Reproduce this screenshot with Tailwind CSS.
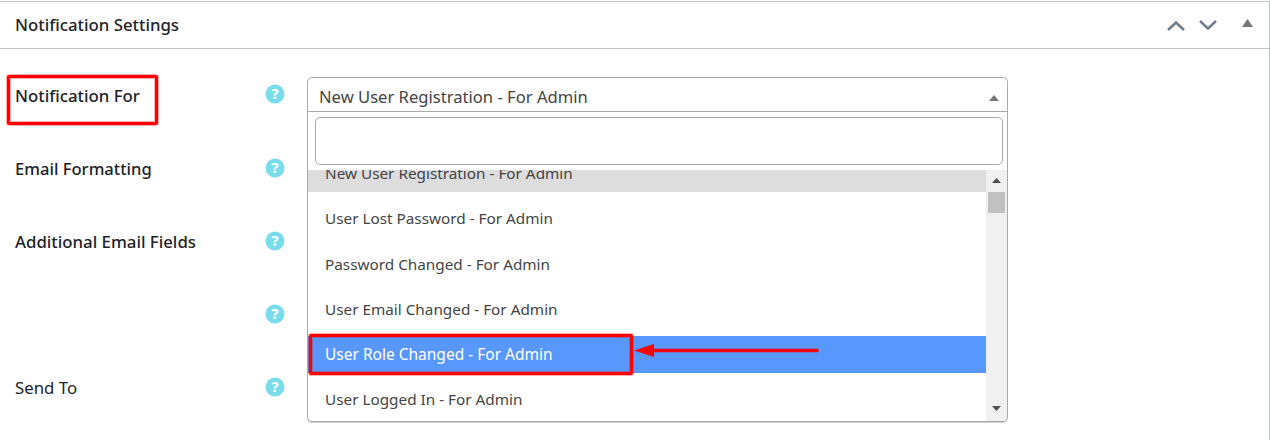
<!DOCTYPE html>
<html lang="en">

<head>
    <meta charset="UTF-8">
    <meta name="viewport" content="width=device-width, initial-scale=1.0">
    <title>Notification Settings</title>
    <script src="https://cdn.jsdelivr.net/npm/@tailwindcss/browser@4"></script>
</head>

<body class="bg-white font-['Noto_Sans',sans-serif] text-[#1d2327] overflow-hidden">
    <div class="relative w-[1270px] h-[440px] overflow-hidden">
        <div class="h-[440px] border-t border-r border-[#c3c4c7] mt-px">
            <!-- panel header -->
            <div class="h-[47px] border-b border-[#c3c4c7] flex items-center justify-between pl-[15px] pr-[17px]">
                <h2 class="text-[16.8px] font-medium text-[#1d2327]">Notification Settings</h2>
                <div class="flex items-center">
                    <svg width="18" height="11" viewBox="0 0 18 11" class="mr-[14px]" fill="none" stroke="#6f7c8a" stroke-width="2.4"><path d="M1 10l8-7.5 8 7.5" /></svg>
                    <svg width="18" height="11" viewBox="0 0 18 11" class="mr-[25px]" fill="none" stroke="#6f7c8a" stroke-width="2.4"><path d="M1 1l8 7.5 8-7.5" /></svg>
                    <svg width="11" height="8" viewBox="0 0 11 8" class="mb-[5px] mr-[-1px]"><path d="M5.5 0L11 8H0z" fill="#72777c" /></svg>
                </div>
            </div>

            <div class="flex">
                <!-- labels -->
                <div class="w-[307px] shrink-0 pl-[15px] pr-[22px] pt-[35px] text-[16.8px] font-medium">
                    <div class="h-[73px] flex justify-between">
                        <span class="leading-[24px]">Notification For</span>
                        <svg width="20" height="20" viewBox="0 0 20 20" class="mt-[0px]"><circle cx="10" cy="10" r="9.5" fill="#78dced" /><text x="10" y="15" text-anchor="middle" font-size="15" font-weight="700" fill="#fff" font-family="Noto Sans">?</text></svg>
                    </div>
                    <div class="h-[73px] flex justify-between">
                        <span class="leading-[24px] text-[16.6px]">Email Formatting</span>
                        <svg width="20" height="20" viewBox="0 0 20 20" class="mt-[1px]"><circle cx="10" cy="10" r="9.5" fill="#78dced" /><text x="10" y="15" text-anchor="middle" font-size="15" font-weight="700" fill="#fff" font-family="Noto Sans">?</text></svg>
                    </div>
                    <div class="h-[73px] flex justify-between">
                        <span class="leading-[24px]">Additional Email Fields</span>
                        <svg width="20" height="20" viewBox="0 0 20 20" class="mt-[1px]"><circle cx="10" cy="10" r="9.5" fill="#78dced" /><text x="10" y="15" text-anchor="middle" font-size="15" font-weight="700" fill="#fff" font-family="Noto Sans">?</text></svg>
                    </div>
                    <div class="h-[73px] flex justify-end">
                        <svg width="20" height="20" viewBox="0 0 20 20" class="mt-[1px]"><circle cx="10" cy="10" r="9.5" fill="#78dced" /><text x="10" y="15" text-anchor="middle" font-size="15" font-weight="700" fill="#fff" font-family="Noto Sans">?</text></svg>
                    </div>
                    <div class="h-[73px] flex justify-between">
                        <span class="leading-[24px] font-normal">Send To</span>
                        <svg width="20" height="20" viewBox="0 0 20 20" class="mt-[1px]"><circle cx="10" cy="10" r="9.5" fill="#78dced" /><text x="10" y="15" text-anchor="middle" font-size="15" font-weight="700" fill="#fff" font-family="Noto Sans">?</text></svg>
                    </div>
                </div>

                <!-- select with open dropdown -->
                <div class="w-[701px] mt-[28px] h-[345px] border border-[#aaaaaa] rounded-[5px] overflow-hidden flex flex-col shadow-[0_1px_0_#d0d0d0]">
                    <div class="h-[33px] shrink-0 flex items-center justify-between pl-[11px] pr-[8px] text-[16.6px] text-[#444444] pt-[6px]">
                        <span>New User Registration - For Admin</span>
                        <svg width="10" height="6" viewBox="0 0 10 6"><path d="M5 0l5 6H0z" fill="#777777" /></svg>
                    </div>
                    <div class="h-[59px] shrink-0 border-t border-[#aaaaaa] pt-[5px] pl-[7px] pr-[4px]">
                        <div class="h-[48px] border border-[#aaaaaa] rounded-[5px]"></div>
                    </div>
                    <div class="flex flex-1 overflow-hidden">
                        <ul class="flex-1 flex flex-col gap-[8.25px] overflow-hidden text-[15.3px] text-[#444444]">
                            <li class="h-[37px] shrink-0 -mt-[15px] pl-[17px] flex items-center bg-[#dddddd]">New User Registration - For Admin</li>
                            <li class="h-[37px] shrink-0 pl-[17px] flex items-center">User Lost Password - For Admin</li>
                            <li class="h-[37px] shrink-0 pl-[17px] flex items-center">Password Changed - For Admin</li>
                            <li class="h-[37px] shrink-0 pl-[17px] flex items-center">User Email Changed - For Admin</li>
                            <li class="h-[37px] shrink-0 pl-[17px] flex items-center bg-[#5897fb] text-white text-[15.5px]">User Role Changed - For Admin</li>
                            <li class="h-[37px] shrink-0 pl-[17px] flex items-center">User Logged In - For Admin</li>
                        </ul>
                        <!-- scrollbar -->
                        <div class="w-[21px] shrink-0 bg-[#f0f0f0] flex flex-col items-center relative">
                            <svg width="9" height="5" viewBox="0 0 9 5" class="mt-[8px]"><path d="M4.500 0L9 5H0z" fill="#505050" /></svg>
                            <div class="w-[17px] h-[21px] bg-[#c1c1c1] mt-[9px]"></div>
                            <svg width="9" height="5" viewBox="0 0 9 5" class="absolute bottom-[10px]"><path d="M4.500 5L9 0H0z" fill="#505050" /></svg>
                        </div>
                    </div>
                </div>
            </div>
        </div>

        <!-- red annotations on top of the screenshot -->
        <div class="absolute left-[7px] top-[75px] w-[151px] h-[50px] border-[3px] border-[#ff0000] rounded-[2px] shadow-[0_0_0_1px_#ff000050,inset_0_0_0_1px_#ff000050]"></div>
        <div class="absolute left-[309px] top-[334px] w-[324px] h-[41px] border-[3px] border-[#ff0000] rounded-[2px] shadow-[0_0_0_1px_#ff000050,inset_0_0_0_1px_#ff000050]"></div>
        <svg class="absolute left-[630px] top-[340px]" width="192" height="20" viewBox="0 0 192 20"><path d="M22 10.500H187" stroke="#ff0000" stroke-width="3.500" stroke-linecap="round" /><path d="M4 10.500L24 4V17z" fill="#ff0000" /></svg>
    </div>
</body>

</html>
